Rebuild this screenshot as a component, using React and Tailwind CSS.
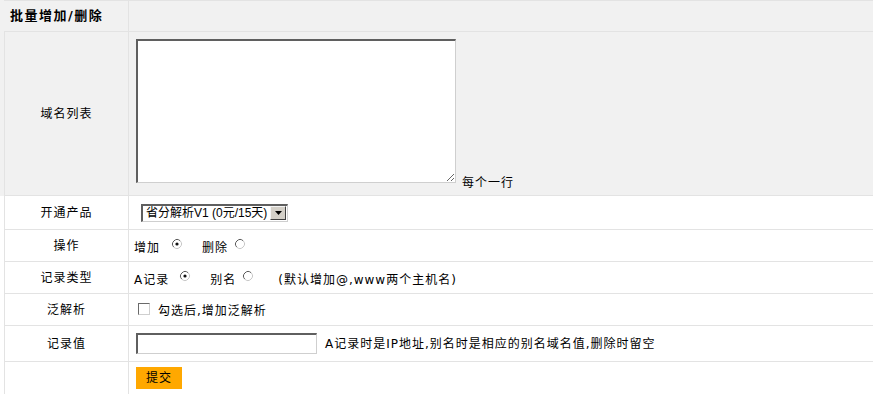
import React from "react";

const Radio = ({ checked }) => (
  <svg width="12" height="12" viewBox="0 0 12 12" className="block">
    <circle cx="6" cy="6" r="4.5" fill="#fff" />
    <path d="M2.82 9.18 A4.5 4.5 0 0 1 9.18 2.82" fill="none" stroke="#5a5a5a" strokeWidth="1" />
    <path d="M9.18 2.82 A4.5 4.5 0 0 1 2.82 9.18" fill="none" stroke="#c8c8c8" strokeWidth="1" />
    {checked && <circle cx="6" cy="6" r="1.6" fill="#111" />}
  </svg>
);

const Row = ({ label, h, gray, children, cellClass = "" }) => (
  <div className={`${gray ? "bg-[#f1f1f1]" : "bg-white"} pl-[4px]`}>
    <div className={`flex ${h} border-b border-[#e3e3e3]`}>
      <div className="w-[125px] shrink-0 border-l border-r border-[#e3e3e3] flex items-center justify-center">
        {label}
      </div>
      <div className={`flex-1 flex ${cellClass}`}>{children}</div>
    </div>
  </div>
);

export default function App() {
  return (
    <div className="w-[873px] h-[394px] overflow-hidden bg-white text-[12px] tracking-[1px] text-black font-['DejaVu_Sans','Noto_Sans_CJK_SC',sans-serif] leading-[14px]">
      {/* header */}
      <div className="bg-[#f1f1f1] pl-[4px]">
        <div className="flex h-[32px] border-t border-b border-[#e3e3e3]">
          <div className="shrink-0 border-r border-[#e3e3e3] flex items-center -ml-[4px] pl-[10px] w-[129px]">
            <span className="font-bold text-[13px] tracking-[1.5px] whitespace-nowrap">批量增加/删除</span>
          </div>
          <div className="flex-1" />
        </div>
      </div>

      <Row label="域名列表" h="h-[164px]" gray cellClass="items-end pl-[7px] pb-[12px]">
        <textarea className="block w-[320px] h-[144px] bg-white border-t-2 border-l-2 border-r border-b border-t-[#5f5f5f] border-l-[#5f5f5f] border-r-[#cfcfcf] border-b-[#cfcfcf] outline-none" />
        <span className="ml-[6px] -mb-[6px] leading-[12px]">每个一行</span>
      </Row>

      <Row label="开通产品" h="h-[34px]" cellClass="items-center pl-[12px]">
        <div className="flex items-center w-[147px] h-[18px] border-t-2 border-l-2 border-r border-b border-t-[#5f5f5f] border-l-[#5f5f5f] border-r-[#cfcfcf] border-b-[#cfcfcf] bg-white tracking-normal font-['Liberation_Sans','Noto_Sans_CJK_SC',sans-serif]">
          <span className="pl-[3px] flex-1 whitespace-nowrap leading-[14px]">省分解析V1 (0元/15天)</span>
          <div className="w-[16px] h-[14px] bg-[#d4d0c8] border border-t-[#f4f4f4] border-l-[#f4f4f4] border-r-[#404040] border-b-[#404040] flex items-center justify-center mr-[1px]">
            <svg width="7" height="4" viewBox="0 0 7 4"><path d="M0 0h7L3.5 4z" fill="#000" /></svg>
          </div>
        </div>
      </Row>

      <Row label="操作" h="h-[32px]" cellClass="items-center pl-[5px]">
        <span className="mt-[4px]">增加</span>
        <span className="ml-[11px] -mt-[3px]"><Radio checked /></span>
        <span className="ml-[19px] mt-[4px]">删除</span>
        <span className="ml-[6px] -mt-[3px]"><Radio /></span>
      </Row>

      <Row label="记录类型" h="h-[32px]" cellClass="items-center pl-[5px]">
        <span className="mt-[4px]">A记录</span>
        <span className="ml-[10px] -mt-[3px]"><Radio checked /></span>
        <span className="ml-[19px] mt-[4px]">别名</span>
        <span className="ml-[6px] -mt-[3px]"><Radio /></span>
        <span className="ml-[24px] mt-[4px] whitespace-nowrap">(默认增加@,www两个主机名)</span>
      </Row>

      <Row label="泛解析" h="h-[32px]" cellClass="items-center pl-[9px]">
        <div className="w-[12px] h-[12px] bg-white border border-t-[#6a6a6a] border-l-[#6a6a6a] border-r-[#cfcfcf] border-b-[#cfcfcf] -mt-[1px]" />
        <span className="ml-[8px] mt-[2px]">勾选后,增加泛解析</span>
      </Row>

      <Row label="记录值" h="h-[36px]" cellClass="items-center pl-[7px]">
        <div className="w-[181px] h-[21px] bg-white border-t-2 border-l-2 border-r border-b border-t-[#5f5f5f] border-l-[#5f5f5f] border-r-[#cfcfcf] border-b-[#cfcfcf]" />
        <span className="ml-[8px] whitespace-nowrap">A记录时是IP地址,别名时是相应的别名域名值,删除时留空</span>
      </Row>

      <Row label="" h="h-[40px]" cellClass="items-start pl-[7px] pt-[5px]">
        <div className="w-[46px] h-[22px] bg-[#ffa800] flex items-center justify-center">提交</div>
      </Row>
    </div>
  );
}
